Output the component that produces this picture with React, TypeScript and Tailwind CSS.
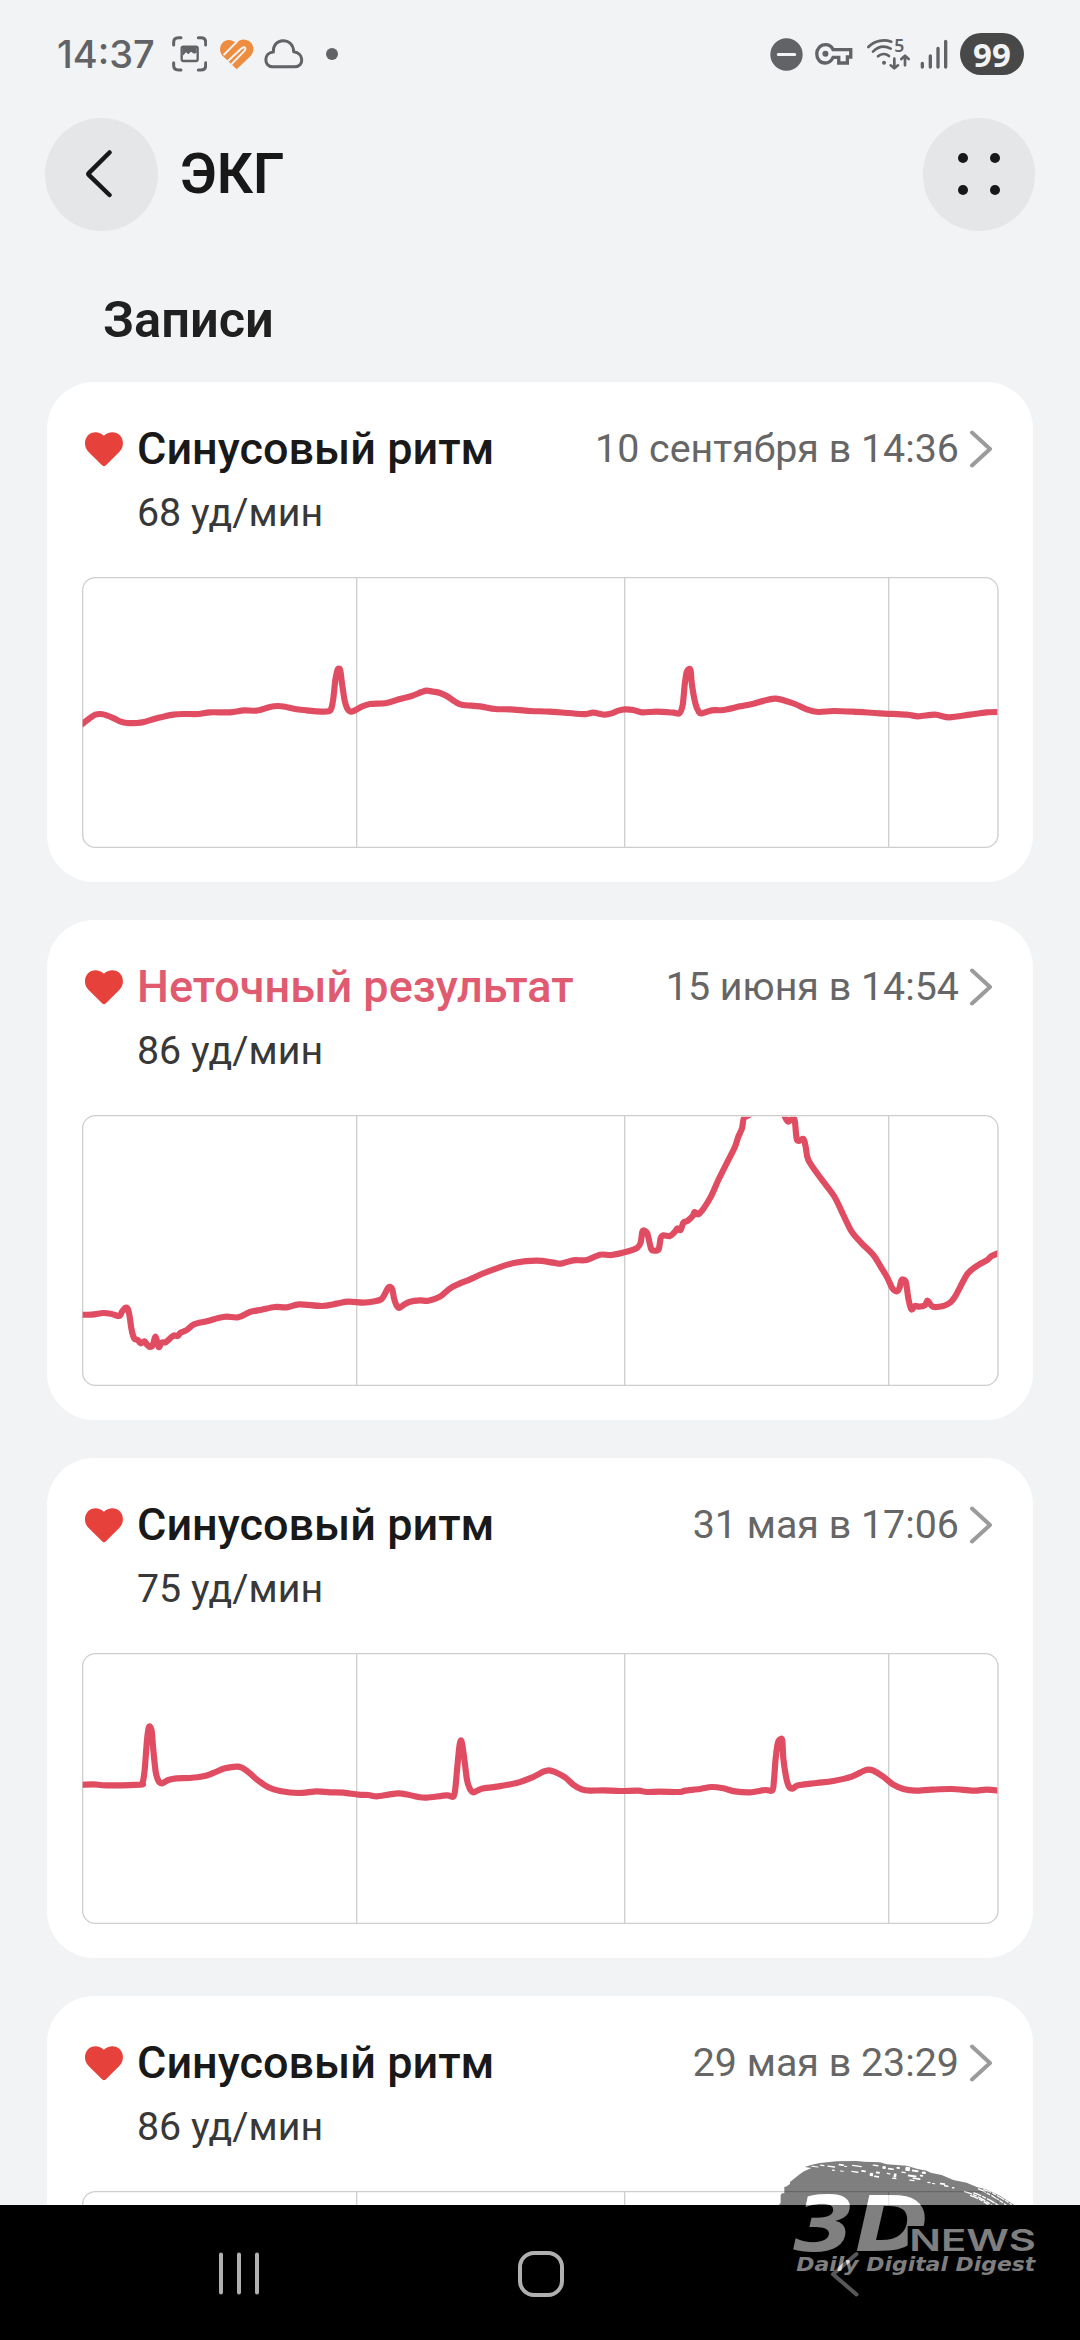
type Point = [number, number];

interface EcgRecord {
  title: string;
  uncertain?: boolean;
  date: string;
  bpm: number;
  trace: Point[];
}

/* Trace points are in thirds of a pixel, measured from the top-left corner of the plot. */
const shift = (dx: number, dy: number, points: Point[]): Point[] =>
  points.map(([x, y]) => [x - dx, y - dy]);

const records: EcgRecord[] = [
  {
    title: 'Синусовый ритм',
    date: '10 сентября в 14:36',
    bpm: 68,
    trace: shift(126, 591, [
      [120, 1036], [128, 1031], [150, 1014], [166, 1004], [182, 1002], [200, 1006], [222, 1015], [240, 1024], [262, 1029], [290, 1029],
      [312, 1026], [345, 1016], [370, 1010], [400, 1004], [430, 1002], [475, 1002], [510, 997], [570, 997], [612, 991],
      [650, 992], [690, 981], [712, 978], [735, 980], [765, 987], [800, 991], [830, 994], [865, 994], [874, 985],
      [880, 955], [886, 900], [892, 872], [896, 866], [901, 872], [906, 910], [914, 962], [922, 986], [932, 995],
      [945, 991], [965, 980], [990, 972], [1040, 969], [1080, 957], [1115, 948], [1145, 936], [1160, 932], [1180, 935],
      [1200, 939], [1220, 948], [1245, 965], [1265, 974], [1320, 979], [1365, 987], [1410, 988], [1470, 993],
      [1530, 995], [1620, 1002], [1640, 1002], [1660, 998], [1695, 1004], [1715, 1000], [1735, 992], [1755, 988],
      [1780, 990], [1805, 997], [1850, 995], [1900, 998], [1918, 1000], [1928, 975], [1934, 915], [1940, 877],
      [1947, 867], [1952, 872], [1956, 915], [1966, 970], [1976, 995], [1985, 1000], [2015, 991], [2050, 990],
      [2100, 979], [2140, 971], [2180, 960], [2208, 956], [2235, 962], [2265, 972], [2300, 988], [2335, 996],
      [2380, 993], [2440, 995], [2520, 1000], [2600, 1004], [2635, 1009], [2685, 1004], [2728, 1012], [2790, 1004],
      [2840, 997], [2885, 996],
    ]),
  },
  {
    title: 'Неточный результат',
    uncertain: true,
    date: '15 июня в 14:54',
    bpm: 86,
    trace: shift(126, 615, [
      [110, 1214], [155, 1214], [190, 1209], [215, 1212], [238, 1218], [246, 1205], [257, 1193], [264, 1198], [269, 1220],
      [275, 1260], [283, 1286], [293, 1290], [302, 1300], [313, 1294], [322, 1305], [330, 1311], [338, 1306],
      [347, 1280], [356, 1311], [365, 1298], [378, 1296], [400, 1277], [413, 1278], [422, 1268], [440, 1260],
      [462, 1243], [500, 1234], [535, 1224], [560, 1220], [595, 1222], [630, 1206], [665, 1199], [705, 1191],
      [740, 1192], [778, 1183], [845, 1188], [890, 1181], [925, 1175], [970, 1178], [1005, 1174], [1025, 1167],
      [1036, 1149], [1044, 1134], [1051, 1131], [1057, 1138], [1062, 1165], [1069, 1185], [1078, 1194], [1092, 1184],
      [1110, 1175], [1140, 1171], [1165, 1172], [1200, 1160], [1235, 1132], [1290, 1108], [1325, 1092], [1370, 1075],
      [1425, 1058], [1490, 1052], [1540, 1058], [1562, 1061], [1600, 1051], [1640, 1050], [1680, 1034], [1715, 1035],
      [1765, 1024], [1792, 1013], [1802, 998], [1807, 965], [1814, 962], [1822, 970], [1829, 1000], [1835, 1020],
      [1845, 1022], [1856, 1018], [1862, 985], [1870, 976], [1890, 978], [1905, 965], [1912, 955], [1922, 960],
      [1930, 938], [1942, 933], [1958, 918], [1964, 906], [1978, 911], [2010, 865], [2035, 810], [2060, 760],
      [2085, 710], [2095, 680], [2106, 655], [2112, 624], [2132, 612], [2170, 575], [2215, 580], [2237, 625],
      [2245, 635], [2263, 627], [2271, 690], [2290, 687], [2297, 710], [2305, 750], [2340, 802], [2382, 858],
      [2410, 915], [2435, 965], [2465, 1000], [2500, 1035], [2525, 1075], [2543, 1105], [2556, 1133], [2570, 1144],
      [2578, 1135], [2584, 1112], [2590, 1109], [2598, 1118], [2605, 1165], [2614, 1198], [2625, 1188], [2638, 1190],
      [2655, 1186], [2663, 1172], [2678, 1190], [2710, 1188], [2730, 1178], [2745, 1160], [2780, 1095], [2800, 1075],
      [2820, 1062], [2842, 1050], [2855, 1038], [2885, 1026],
    ]),
  },
  {
    title: 'Синусовый ритм',
    date: '31 мая в 17:06',
    bpm: 75,
    trace: shift(126, 609, [
      [110, 1005], [160, 1003], [200, 1006], [300, 1004], [308, 997], [314, 960], [321, 870], [326, 834], [330, 830],
      [335, 842], [340, 900], [347, 965], [355, 992], [365, 1000], [385, 990], [410, 985], [450, 984], [490, 979],
      [520, 969], [555, 955], [595, 950], [620, 962], [650, 988], [685, 1012], [720, 1023], [775, 1029], [830, 1024],
      [870, 1027], [910, 1028], [955, 1034], [985, 1035], [1010, 1039], [1045, 1034], [1075, 1030], [1105, 1034],
      [1130, 1040], [1160, 1043], [1220, 1036], [1240, 1040], [1246, 1015], [1252, 950], [1258, 890], [1262, 871],
      [1267, 885], [1274, 935], [1281, 990], [1289, 1015], [1300, 1027], [1325, 1016], [1370, 1010], [1430, 999],
      [1475, 983], [1510, 965], [1527, 961], [1545, 966], [1575, 982], [1600, 1004], [1625, 1018], [1650, 1022],
      [1690, 1021], [1740, 1023], [1795, 1022], [1820, 1026], [1860, 1025], [1920, 1026], [1935, 1022], [1980, 1017],
      [2015, 1011], [2050, 1015], [2085, 1024], [2130, 1027], [2175, 1020], [2197, 1021], [2202, 990], [2207, 925],
      [2214, 877], [2222, 867], [2227, 872], [2230, 925], [2238, 980], [2246, 1008], [2257, 1016], [2275, 1006],
      [2330, 999], [2380, 993], [2435, 980], [2470, 963], [2485, 959], [2500, 962], [2530, 980], [2560, 1004],
      [2590, 1017], [2625, 1022], [2675, 1019], [2735, 1017], [2800, 1022], [2840, 1019], [2885, 1023],
    ]),
  },
  { title: 'Синусовый ритм', date: '29 мая в 23:29', bpm: 86, trace: [] },
];

/* Catmull-Rom spline with reduced tension, written as cubic segments. */
function smoothPath(p: Point[]): string {
  if (!p.length) return '';
  const k = 6.5;
  let d = `M${p[0][0]} ${p[0][1]}`;
  for (let i = 0; i < p.length - 1; i++) {
    const a = p[i - 1] ?? p[i];
    const b = p[i];
    const c = p[i + 1];
    const e = p[i + 2] ?? c;
    d += `C${b[0] + (c[0] - a[0]) / k} ${b[1] + (c[1] - a[1]) / k} ${c[0] - (e[0] - b[0]) / k} ${c[1] - (e[1] - b[1]) / k} ${c[0]} ${c[1]}`;
  }
  return d;
}

function EcgChart({ trace }: { trace: Point[] }) {
  return (
    <svg className="block h-[271px] w-[917px]" viewBox="0 0 2751 813">
      <g stroke="#cecece" strokeWidth="4" fill="none">
        <path d="M824 2V811M1628 2V811M2420 2V811" />
        <rect x="2" y="2" width="2746" height="809" rx="38" />
      </g>
      <svg x="2" y="5" width="2744" height="803" viewBox="2 5 2744 803">
        <path d={smoothPath(trace)} fill="none" stroke="#e04c62" strokeWidth="18.500" strokeLinejoin="round" />
      </svg>
    </svg>
  );
}

function RecordCard({ record }: { record: EcgRecord }) {
  return (
    <article className="h-[500px] w-[986px] shrink-0 rounded-[47px] bg-white px-[35px] pt-[41px]">
      <div className="flex h-[52px] items-center">
        <svg className="ml-[2px] h-[36px] w-[40px]" viewBox="0 0 40 36">
          <path
            d="M20 35.200c-.9 0-1.500-.5-2.200-1.200L4.400 20.700C-.3 15.900.2 8.500 3.800 4.500 8.200-.2 15.600.2 19.900 4.700 24.300.2 31.700-.2 36.100 4.500c3.600 4 4.100 11.400-.6 16.200L22.200 34c-.7.7-1.300 1.200-2.200 1.200Z"
            fill="#e6413a"
          />
        </svg>
        <h3
          className={
            record.uncertain
              ? 'ml-[13px] text-[45px] leading-[52px] font-medium whitespace-nowrap text-[#e05a70]'
              : 'ml-[13px] text-[45px] leading-[52px] font-medium whitespace-nowrap text-[#191919]'
          }
        >
          {record.title}
        </h3>
        <span className="ml-auto text-[39.375px] leading-[52px] whitespace-nowrap text-[#666666]">{record.date}</span>
        <svg className="mr-[5px] ml-[10px] h-[38px] w-[24px]" viewBox="0 0 24 38" fill="none">
          <path d="M3 2.500 21 19 3 35.500" stroke="#9b9b9b" strokeWidth="4" strokeLinecap="round" strokeLinejoin="round" />
        </svg>
      </div>
      <p className="mt-[15px] ml-[55px] text-[39.375px] leading-[46px] text-[#383838]">{record.bpm} уд/мин</p>
      <div className="mt-[41px]">
        <EcgChart trace={record.trace} />
      </div>
    </article>
  );
}

function StatusBar() {
  return (
    <div className="flex h-[108px] shrink-0 items-center pr-[56px] pl-[57px] text-[#626366]">
      <span className="w-[115px] font-[Inter] text-[38px] leading-[46px] font-medium">14:37</span>
      <svg className="h-[36px] w-[35px]" viewBox="0 0 105 108" fill="none" stroke="currentColor" strokeWidth="9" strokeLinecap="round">
        <path d="M5 27V19Q5 5 19 5H27M79 5H87Q101 5 101 19V27M101 80V88Q101 102 87 102H79M27 102H19Q5 102 5 88V80" />
        <rect x="29" y="32" width="48" height="43" rx="5" strokeWidth="7" />
        <path d="M32 33H74V50L66 53 57 47 49 55 42 49 32 60Z" fill="currentColor" stroke="none" />
      </svg>
      <svg className="ml-[12px] h-[31px] w-[35px]" viewBox="0 0 105 93">
        <path d="M52 14C60 3 70 1 78 2c26 3 34 34 14 52L53 91 12 52C-5 35 4 4 29 3c9 0 17 4 23 11Z" fill="#ec8d40" />
        <path d="M54 8 14 48M26 67 68 28q9-6 11 0 1 4-4 9L37 76" fill="none" stroke="#f1f3f5" strokeWidth="6" />
      </svg>
      <svg className="ml-[10px] h-[30px] w-[40px]" viewBox="0 0 120 90" fill="none" stroke="currentColor" strokeWidth="9">
        <path d="M25 83H93c28 0 27-42-4-45C88 15 73 5 57 5 40 5 27 19 28 39-2 41-1 83 25 83Z" strokeLinejoin="round" />
      </svg>
      <span className="ml-[22px] size-[12px] rounded-full bg-[#626366]" />

      <svg className="ml-auto h-[33px] w-[33px]" viewBox="0 0 99 99">
        <circle cx="49.500" cy="49.500" r="48.500" fill="currentColor" />
        <path d="M25 49.500H74" stroke="#f1f3f5" strokeWidth="9" strokeLinecap="round" />
      </svg>
      <svg className="ml-[12.500px] h-[22px] w-[37.500px]" viewBox="0 0 112 66" fill="none" stroke="currentColor" strokeWidth="10">
        <path d="M54 20H107V42H97V60H71V43H54C48 56 40 60 30 60 15 60 5 48 5 32 5 17 16 5 31 5c11 0 19 6 23 15Z" />
        <circle cx="31" cy="32" r="9" fill="currentColor" stroke="none" />
      </svg>
      <svg className="ml-[14.500px] h-[31px] w-[43px] overflow-visible" viewBox="0 0 129 93">
        <g fill="none" stroke="currentColor" strokeWidth="8" strokeLinecap="round" strokeLinejoin="round">
          <path d="M4 24C24 3 52 1 73 8M18 38C34 22 54 20 71 29M33 52C43 43 57 43 66 51" />
          <path d="M82 59V87M71 79 82 88 93 79M114 79V51M103 60 114 50 125 60" />
        </g>
        <circle cx="51" cy="71" r="6" fill="currentColor" />
        <text x="82" y="39" fontFamily="Noto Sans, sans-serif" fontWeight="600" fontSize="53" fill="currentColor">
          5
        </text>
      </svg>
      <svg className="ml-[9.500px] h-[30px] w-[28px]" viewBox="0 0 84 90" stroke="currentColor" strokeWidth="10" strokeLinecap="round">
        <path d="M7 73V84M31 51V84M54 28V84M77 7V84" />
      </svg>
      <span className="ml-[12.500px] flex h-[42px] w-[64px] items-center justify-center rounded-full bg-[#484848] font-['Noto_Sans'] text-[33px] leading-none font-bold text-[#f1f3f5]">
        99
      </span>
    </div>
  );
}

function Header() {
  return (
    <header className="flex h-[132px] shrink-0 items-center pr-[45px] pl-[45px]">
      <button className="flex size-[113px] items-center justify-center rounded-full bg-[#e5e6e8]">
        <svg className="mr-[6px] h-[50px] w-[28px]" viewBox="0 0 28 50" fill="none">
          <path d="M24.500 3.500 3.800 24.200q-.8.800 0 1.600L24.500 46" stroke="#181818" strokeWidth="4.500" strokeLinecap="round" strokeLinejoin="round" />
        </svg>
      </button>
      <h1 className="ml-[22px] text-[56.25px] leading-[66px] font-semibold text-[#181818]">ЭКГ</h1>
      <button className="ml-auto flex h-[113px] w-[112px] flex-wrap content-center gap-[22px] rounded-full bg-[#e5e6e8] px-[35px]">
        <span className="size-[10px] rounded-full bg-[#181818]" />
        <span className="size-[10px] rounded-full bg-[#181818]" />
        <span className="size-[10px] rounded-full bg-[#181818]" />
        <span className="size-[10px] rounded-full bg-[#181818]" />
      </button>
    </header>
  );
}

function NavBar() {
  return (
    <nav className="flex h-[135px] shrink-0 items-center bg-black pt-[2px] pl-[218px]">
      <svg className="h-[43px] w-[42px]" viewBox="0 0 42 43" stroke="#b0b0b0" strokeWidth="4" strokeLinecap="round">
        <path d="M3 2.500V40.500M21 2.500V40.500M39 2.500V40.500" />
      </svg>
      <span className="ml-[258px] h-[46px] w-[46px] rounded-[16px] border-[4px] border-[#b0b0b0]" />
      <svg className="ml-[266px] h-[46px] w-[30px]" viewBox="0 0 30 46" fill="none">
        <path d="M26.500 3 3 23.200 26.500 43.500" stroke="#b0b0b0" strokeWidth="4" strokeLinecap="round" strokeLinejoin="round" />
      </svg>
    </nav>
  );
}

/* Small light nicks along the upper edge of the brush stroke. */
const flecks: [number, number, number, number][] = [
  [214, 107, 22, 3], [240, 103, 14, 4], [262, 106, 24, 4], [296, 101, 16, 5], [312, 107, 10, 3], [336, 104, 30, 4],
  [276, 118, 9, 4], [300, 121, 12, 3], [334, 122, 22, 4], [364, 120, 14, 5], [398, 103, 18, 4], [428, 108, 10, 8],
  [444, 113, 18, 5], [470, 110, 10, 6], [390, 128, 10, 10], [408, 124, 12, 6], [402, 136, 16, 5], [440, 128, 12, 4],
  [462, 130, 8, 12], [456, 142, 14, 4], [497, 110, 14, 12], [516, 118, 20, 6], [484, 124, 14, 4], [546, 124, 12, 7],
  [504, 133, 26, 6], [518, 142, 24, 5], [508, 148, 16, 4], [540, 134, 10, 5], [562, 155, 10, 4], [576, 159, 10, 3],
  [600, 158, 16, 5], [612, 165, 14, 4], [636, 171, 8, 4],
];

function Watermark() {
  const threeD = (
    <text x="160" y="363" fontFamily="DejaVu Sans, sans-serif" fontWeight="700" fontStyle="italic" fontSize="231" textLength="406" lengthAdjust="spacingAndGlyphs">
      3D
    </text>
  );
  const words = (
    <>
      <text x="508" y="362" fontFamily="Inter, sans-serif" fontWeight="600" fontSize="91" textLength="380" lengthAdjust="spacingAndGlyphs">
        NEWS
      </text>
      <text x="169" y="422" fontFamily="DejaVu Sans, sans-serif" fontWeight="700" fontStyle="italic" fontSize="58" textLength="717" lengthAdjust="spacingAndGlyphs">
        Daily Digital Digest
      </text>
    </>
  );
  return (
    <svg className="pointer-events-none absolute right-0 bottom-0 h-[210px] w-[340px]" viewBox="0 0 1020 630">
      <defs>
        <clipPath id="mark">
          <path d="M140 180H600V288H503V380H140Z" />
        </clipPath>
        <mask id="brush" maskUnits="userSpaceOnUse" x="0" y="0" width="1020" height="630">
          <rect width="1020" height="630" fill="#fff" />
          <g fill="#000">
            <g clipPath="url(#mark)">{threeD}</g>
            {words}
            {flecks.map(([x, y, w, h], i) => (
              <rect key={i} x={x} y={y} width={w} height={h} rx="2" transform={`rotate(8 ${x} ${y})`} />
            ))}
          </g>
          <path
            d="M672 184Q720 198 764 232M700 188Q745 204 790 236M714 176Q765 198 812 236M730 178Q770 192 815 224M690 196Q720 206 745 224"
            stroke="#000"
            strokeWidth="4"
            strokeDasharray="26 3 12 4"
            fill="none"
          />
        </mask>
      </defs>
      <path
        mask="url(#brush)"
        fill="#000"
        fillOpacity="0.5"
        d="M118 230V222L122 220V196L126 190H133V170H138L150 162V156L165 144L180 132L192 124L214 114L194 111L216 104L240 99L290 94L350 93L372 95L420 97L440 103L500 107L530 116L560 122L572 128L605 135L640 150L680 158L712 172L738 178L780 197L824 226V520H118Z"
      />
      <g fill="#fff" fillOpacity="0.5">
        <g clipPath="url(#mark)">{threeD}</g>
        {words}
      </g>
    </svg>
  );
}

export default function App() {
  return (
    <div className="relative flex h-[2340px] w-[1080px] flex-col overflow-hidden bg-[#f1f3f5] font-[Roboto,sans-serif]">
      <StatusBar />
      <Header />
      <h2 className="ml-[103px] h-[142px] shrink-0 pt-[50px] text-[50.600px] leading-[60px] font-semibold text-[#202020]">Записи</h2>
      <main className="flex min-h-0 flex-1 flex-col gap-[38px] overflow-hidden pl-[47px]">
        {records.map((record, i) => (
          <RecordCard key={i} record={record} />
        ))}
      </main>
      <NavBar />
      <Watermark />
    </div>
  );
}
